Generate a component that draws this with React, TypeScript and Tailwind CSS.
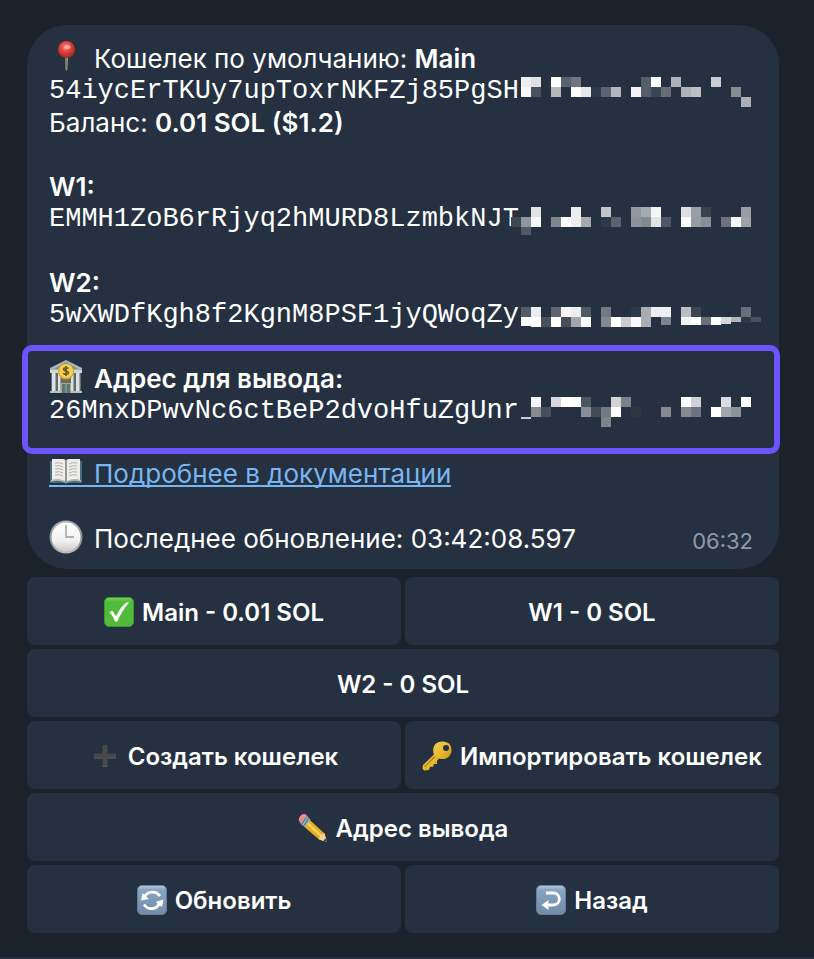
import type { ReactNode } from "react";
import { clsx } from "clsx";

// [column, row, colour, height?] on a 10px grid
type Cell = [number, number, string, number?];

const MAIN_CELLS: Cell[] = [
  [1, 0, "#eeeff1"], [2, 0, "#dfe0e2"], [4, 0, "#ffffff"], [5, 0, "#5a6270"], [6, 0, "#6f767f"],
  [13, 0, "#545e69"], [14, 0, "#ffffff"], [16, 0, "#aeb3b8"], [20, 0, "#c9ccd1"],
  [1, 1, "#f8f8f9"], [2, 1, "#48525d"], [4, 1, "#b4b7bc"], [6, 1, "#ffffff"], [7, 1, "#e6e7e9"],
  [8, 1, "#2d3a47"], [9, 1, "#5c626f"], [10, 1, "#b2b5bb"], [12, 1, "#f3f4f6"], [13, 1, "#545e69"],
  [14, 1, "#3b4653"], [15, 1, "#666c78"], [17, 1, "#aeb1b6"], [18, 1, "#bcbfc3"], [22, 1, "#858c92"],
  [23, 2, "#abaeb5"],
];

const W1_CELLS: Cell[] = [
  [2, 0, "#e0e1e3"], [6, 0, "#ecedef"], [9, 0, "#c2c5ca"], [12, 0, "#91969f"], [13, 0, "#a5a9b1"],
  [14, 0, "#f6f6f7"], [17, 0, "#dddfe1"], [18, 0, "#999ea7"], [19, 0, "#384350"], [23, 0, "#979ca5"],
  [0, 1, "#3b4753"], [1, 1, "#91959c"], [2, 1, "#f6f7f9"], [4, 1, "#80858e"], [5, 1, "#ffffff"],
  [6, 1, "#ecedef"], [7, 1, "#a5aab0"], [9, 1, "#2d3946"], [10, 1, "#59636d"], [12, 1, "#8e939b"],
  [13, 1, "#838990"], [14, 1, "#e1e2e4"], [15, 1, "#4e5763"], [17, 1, "#fafafa"], [18, 1, "#969ba4"],
  [19, 1, "#898f97"], [21, 1, "#6b727c"], [22, 1, "#f5f5f8"], [23, 1, "#9fa2aa"],
  [1, 2, "#4e5965", 8],
];

const W2_CELLS: Cell[] = [
  [1, 0, "#535d68"], [2, 0, "#ecedef"], [4, 0, "#5f6573"], [5, 0, "#f6f6f6"], [6, 0, "#ecedef"],
  [7, 0, "#4f5a65"], [9, 0, "#727980"], [12, 0, "#2d3947"], [13, 0, "#a8abb2"], [14, 0, "#ecedef"],
  [15, 0, "#eff0f2"], [17, 0, "#babdc2"], [18, 0, "#3b4652"], [22, 0, "#28323f"], [23, 0, "#6a707b"],
  [1, 1, "#ffffff", 9], [2, 1, "#ffffff"], [3, 1, "#48525d"], [4, 1, "#ffffff"], [5, 1, "#464f5b"],
  [6, 1, "#a4a6ae"], [7, 1, "#ffffff"], [9, 1, "#838991"], [10, 1, "#ffffff"], [11, 1, "#cccdd2"],
  [12, 1, "#f9f9f9"], [13, 1, "#aaadb3"], [15, 1, "#7d838c", 8], [17, 1, "#f2f3f4", 8],
  [18, 1, "#ffffff", 8], [19, 1, "#68707b", 8], [20, 1, "#ffffff", 8], [21, 1, "#d6d8da", 7],
  [22, 1, "#b2b5ba", 5], [23, 1, "#2e3946", 6], [24, 1, "#464f5b", 5],
];

const WITHDRAW_CELLS: Cell[] = [
  [2, 0, "#f4f5f6"], [4, 0, "#d5d7da"], [5, 0, "#ffffff"], [6, 0, "#fbfbfb"], [7, 0, "#4c5661"],
  [10, 0, "#d1d3d6"], [11, 0, "#7c8289"], [17, 0, "#ffffff"], [18, 0, "#cfd1d4"], [21, 0, "#dbdce0"],
  [23, 0, "#ffffff"],
  [2, 1, "#868b92"], [3, 1, "#444f5a"], [7, 1, "#878d96"], [8, 1, "#424c58"], [9, 1, "#737981"],
  [10, 1, "#fafafa"], [12, 1, "#2c3743"], [15, 1, "#868b92"], [17, 1, "#868b93"], [18, 1, "#6b7280"],
  [20, 1, "#ffffff"], [21, 1, "#a1a4ab"], [22, 1, "#8d9299"],
  [1, 2, "#c8cbd0", 2], [9, 2, "#7e838a"],
];

function Mosaic({ cells, top }: { cells: Cell[]; top: number }) {
  return (
    <svg width="240" height="32" className="shrink-0 overflow-visible" shapeRendering="crispEdges" aria-hidden="true">
      {cells.map(([col, row, fill, height = 10]) => (
        <rect key={`${col}-${row}`} x={col * 10 - 2} y={row * 10 + top} width="10" height={height} fill={fill} />
      ))}
    </svg>
  );
}

function Address({ value, cells, top }: { value: string; cells: Cell[]; top: number }) {
  return (
    <div className="flex h-8">
      <code className="w-[464px] shrink-0 whitespace-nowrap font-['Liberation_Mono',monospace] text-[27px] leading-8">
        {value}
      </code>
      <Mosaic cells={cells} top={top} />
    </div>
  );
}

function PinIcon() {
  return (
    <svg width="34" height="34" viewBox="0 0 34 34" className="mb-1 shrink-0" aria-hidden="true">
      <defs>
        <radialGradient id="pin" cx="0.45" cy="0.35" r="0.65">
          <stop offset="0" stopColor="#ff8d80" />
          <stop offset="0.45" stopColor="#e0453c" />
          <stop offset="1" stopColor="#a82420" />
        </radialGradient>
      </defs>
      <path d="M16 17h3l-.5 12-1 2-1-2z" fill="#a39a92" />
      <path d="M16.5 17h1v12h-.6z" fill="#635751" />
      <circle cx="17.5" cy="9.5" r="8.5" fill="url(#pin)" />
      <ellipse cx="18.5" cy="7" rx="3" ry="2" fill="#ffc6bd" opacity=".65" />
    </svg>
  );
}

function BankIcon() {
  return (
    <svg width="34" height="34" viewBox="0 0 34 34" className="mb-1 shrink-0" aria-hidden="true">
      <path d="M2 12h30v19H2z" fill="#5d6c70" />
      <path d="M17 0 33 8v4H1V8z" fill="#aab7b6" />
      <path d="M17 2 29 9H5z" fill="#7e8e90" />
      <path d="M1 10h32v3H1z" fill="#d0d6d4" />
      <path d="M3 13h4v18H3zm6 0h3v18H9zm13 0h3v18h-3zm5 0h4v18h-4z" fill="#dde1e1" />
      <path d="M6 13h1v18H6zm5 0h1v18h-1zm13 0h1v18h-1zm6 0h1v18h-1z" fill="#9ca7a9" />
      <path d="M1 31h32v2H1z" fill="#b8c0bf" />
      <path d="M12 23h10v10H12z" fill="#c9a545" />
      <path d="M13 24h3.500v9H13zm4.500 0H21v9h-3.500z" fill="#52768a" />
      <circle cx="17" cy="11.5" r="8" fill="#d6a329" />
      <circle cx="17" cy="11" r="7" fill="#f5d14c" />
      <path
        d="M19.500 8.500c-1-1-4.700-1.300-5 .5-.3 2.300 5.300 1.500 5 4-.3 2-4 1.500-5.200.2M17 6v10"
        fill="none"
        stroke="#60521e"
        strokeWidth="1.5"
      />
    </svg>
  );
}

function BookIcon() {
  return (
    <svg width="34" height="34" viewBox="0 3 34 34" className="shrink-0" aria-hidden="true">
      <path d="M1 5h32v22H19l-2 1-2-1H1z" fill="#456f87" />
      <path d="M3 3c5-1 10-1 14 1 4-2 9-2 14-1v21c-5-1-10-1-14 2-4-3-9-3-14-2z" fill="#eeeeeb" />
      <path d="M2 25c6-2 11-1 15 1 4-2 9-3 15-1" fill="none" stroke="#b8bcb9" strokeWidth="1.5" />
      <path d="M17 4v22" stroke="#777" strokeWidth="1.5" />
      <path
        d="M6 7q5-1 8 1M6 10q5-1 8 1M6 13q5-1 8 1M6 16q5-1 8 1M6 19q5-1 8 1M20 8q3-2 8-1M20 11q3-2 8-1M20 14q3-2 8-1M20 17q3-2 8-1M20 20q3-2 8-1"
        fill="none"
        stroke="#b0b1af"
        strokeWidth="1"
      />
    </svg>
  );
}

function ClockIcon() {
  return (
    <svg width="34" height="34" viewBox="0 0 34 34" className="mb-1 shrink-0" aria-hidden="true">
      <defs>
        <linearGradient id="clockRim" x1="0" y1="0" x2="0" y2="1">
          <stop offset="0" stopColor="#a8b5c6" />
          <stop offset="0.5" stopColor="#8b8d90" />
          <stop offset="1" stopColor="#bdbdbd" />
        </linearGradient>
        <linearGradient id="clockFace" x1="0" y1="0" x2="0" y2="1">
          <stop offset="0" stopColor="#ffffff" />
          <stop offset="0.65" stopColor="#f0f0f0" />
          <stop offset="1" stopColor="#c9c9c9" />
        </linearGradient>
      </defs>
      <circle cx="17" cy="17" r="16.5" fill="url(#clockRim)" />
      <circle cx="17" cy="17" r="14.5" fill="url(#clockFace)" />
      <path d="M17 5v12h8" fill="none" stroke="#b0b0b0" strokeWidth="1.8" />
    </svg>
  );
}

function CheckIcon() {
  return (
    <svg width="30" height="30" viewBox="0 0 30 30" className="shrink-0" aria-hidden="true">
      <defs>
        <linearGradient id="check" x1="0" y1="0" x2="0" y2="1">
          <stop offset="0" stopColor="#7ed45e" />
          <stop offset="0.15" stopColor="#4fbd3b" />
          <stop offset="1" stopColor="#53b93c" />
        </linearGradient>
      </defs>
      <rect x=".5" y=".5" width="29" height="29" rx="4.5" fill="url(#check)" stroke="#399a2a" />
      <path d="M5.500 15.500 8 13.500c1.700 1.700 3 3.700 4 5.700C14.700 13.500 18 9 22.300 5.500H25C20 11.500 16.500 17 13.300 24.500H11c-1.200-3.400-2.900-6.300-5.500-9z" fill="#fff" />
    </svg>
  );
}

function PlusIcon() {
  return (
    <svg width="30" height="30" viewBox="0 0 30 30" className="shrink-0" aria-hidden="true">
      <path d="M12.500 4h5v8.500H26v5h-8.500V26h-5v-8.500H4v-5h8.500z" fill="#484848" />
      <path d="M4 17h8.500M17.500 17H26M12.500 25.500h5" stroke="#5b5a59" />
    </svg>
  );
}

function KeyIcon() {
  return (
    <svg width="30" height="30" viewBox="0 0 30 30" className="shrink-0" aria-hidden="true">
      <defs>
        <linearGradient id="key" x1="0" y1="0" x2="1" y2="1">
          <stop offset="0" stopColor="#f7dc67" />
          <stop offset="0.55" stopColor="#e6b62d" />
          <stop offset="1" stopColor="#a87712" />
        </linearGradient>
      </defs>
      <path
        fillRule="evenodd"
        d="M13 3.500c3-4 11-4 14.500-.5 3 4 2.500 10-1 13-3 2.500-7 2.500-9.500 1.500L15 20v3h-3l-1 3-3-.3L7 29l-5 .5-1.500-2L1 24l11-10.500c-1.500-3-1-7 1-10zM24 4a3 3 0 1 0 .1 6 3 3 0 0 0-.1-6z"
        fill="url(#key)"
      />
      <path d="M2.500 26 13 15.500" stroke="#a97f20" strokeWidth="1.2" />
    </svg>
  );
}

function PencilIcon() {
  return (
    <svg width="30" height="30" viewBox="0 0 30 30" className="shrink-0" aria-hidden="true">
      <path d="m8.500 4 18 16.500L29 29l-8-2.500L3 11z" fill="#e7ad24" />
      <path d="m7 6.500 17.500 16-1.500 1.700-17.500-16z" fill="#f9d75b" />
      <path d="M3 11 1 8C-.3 5.500 3.500.2 7 1l3.500 3-6 8.500z" fill="#e5797d" />
      <path d="m7.500 2 5 4.200-5.500 8L2.500 10z" fill="#8eabc0" />
      <path d="m9 3.500-5.500 8M11 5l-5.500 8" stroke="#526e83" />
      <path d="M.8 7C.8 4 4 .5 7 1l1.500 1.300-5 7z" fill="#ee8a8d" />
      <path d="m26.500 20.500 2.500 8.500-8-2.500c.5-2.800 3-5.500 5.500-6z" fill="#efd3a4" />
      <path d="m28 25.500 1 3.500-3.500-1c.5-1.200 1.400-2.100 2.500-2.500z" fill="#39383a" />
    </svg>
  );
}

function BlueKey({ id, children }: { id: string; children: ReactNode }) {
  return (
    <svg width="30" height="30" viewBox="0 0 30 30" className="shrink-0" aria-hidden="true">
      <defs>
        <linearGradient id={id} x1="0" y1="0" x2="0" y2="1">
          <stop offset="0" stopColor="#b4cce0" />
          <stop offset="0.15" stopColor="#87a5c2" />
          <stop offset="1" stopColor="#718ba6" />
        </linearGradient>
      </defs>
      <rect x=".5" y=".5" width="29" height="29" rx="4.5" fill={`url(#${id})`} stroke="#668099" />
      {children}
    </svg>
  );
}

function RefreshIcon() {
  return (
    <BlueKey id="refresh">
      <path d="M7.500 11.500C11 6 18.500 5.500 23 11M22.500 18.500C19 25 11 25.500 7 19.500" fill="none" stroke="#fff" strokeWidth="2.8" />
      <path d="m5.500 8-1.500 7.500 8-1.500zM26.500 14.500 18.500 17l6.500 5z" fill="#fff" />
    </BlueKey>
  );
}

function BackIcon() {
  return (
    <BlueKey id="back">
      <path d="M10 8h7c8.500 0 8.500 12 0 12h-5" fill="none" stroke="#fff" strokeWidth="2.8" />
      <path d="m5.500 20 7-5v10z" fill="#fff" />
    </BlueKey>
  );
}

function KeyboardButton({ icon, wide, children }: { icon?: ReactNode; wide?: boolean; children: ReactNode }) {
  return (
    <button
      type="button"
      className={clsx(
        "flex h-[68px] items-center justify-center gap-2 whitespace-nowrap rounded-lg bg-[#253040] pt-0.5 text-2xl font-semibold",
        wide && "col-span-2"
      )}
    >
      {icon}
      <span className="pt-0.5">{children}</span>
    </button>
  );
}

export default function App() {
  return (
    <main className="min-h-screen border-b-2 border-[#242f40] bg-[#1b222a] pt-[25px] pr-[35px] pb-6 pl-[27px] font-['Inter','Liberation_Sans',sans-serif] text-white">
      <article className="rounded-[40px] bg-[#253040] px-[22px] pt-[18px] pb-[14px] text-[26px] leading-8">
        <section>
          <div className="flex h-8 items-center gap-[11px]">
            <PinIcon />
            <p>
              Кошелек по умолчанию: <strong className="font-semibold">Main</strong>
            </p>
          </div>
          <Address value="54iycErTKUy7upToxrNKFZj85PgSH" cells={MAIN_CELLS} top={2} />
          <p>
            Баланс: <strong className="font-semibold">0.01 SOL ($1.2)</strong>
          </p>
        </section>

        <section className="mt-8">
          <h2 className="font-semibold">W1:</h2>
          <Address value="EMMH1ZoB6rRjyq2hMURD8LzmbkNJT" cells={W1_CELLS} top={4} />
        </section>

        <section className="mt-8">
          <h2 className="font-semibold">W2:</h2>
          <Address value="5wXWDfKgh8f2KgnM8PSF1jyQWoqZy" cells={W2_CELLS} top={8} />
        </section>

        <section className="relative mt-8">
          <div className="pointer-events-none absolute -top-[18px] -right-[23px] -bottom-[27px] -left-[27px] rounded-[10px] border-[6px] border-[#6a54fa]" />
          <h2 className="flex h-8 items-center gap-[11px] font-semibold">
            <BankIcon />
            Адрес для вывода:
          </h2>
          <Address value="26MnxDPwvNc6ctBeP2dvoHfuZgUnr" cells={WITHDRAW_CELLS} top={2} />
        </section>

        <div className="mt-8 flex h-8 items-start">
          <a
            href="#docs"
            className="flex h-7 items-start gap-[11px] border-b-2 border-[#78b6f3] leading-[30px] text-[#78b6f3]"
          >
            <BookIcon />
            Подробнее в документации
          </a>
        </div>

        <footer className="mt-8 flex h-8 items-center justify-between pr-1">
          <div className="flex items-center gap-[11px]">
            <ClockIcon />
            <p>Последнее обновление: 03:42:08.597</p>
          </div>
          <time className="pt-1 text-[22px] text-[#8d9aaa]">06:32</time>
        </footer>
      </article>

      <div className="mt-2 grid grid-cols-2 gap-1">
        <KeyboardButton icon={<CheckIcon />}>Main - 0.01 SOL</KeyboardButton>
        <KeyboardButton>W1 - 0 SOL</KeyboardButton>
        <KeyboardButton wide>W2 - 0 SOL</KeyboardButton>
        <KeyboardButton icon={<PlusIcon />}>Создать кошелек</KeyboardButton>
        <KeyboardButton icon={<KeyIcon />}>Импортировать кошелек</KeyboardButton>
        <KeyboardButton icon={<PencilIcon />} wide>
          Адрес вывода
        </KeyboardButton>
        <KeyboardButton icon={<RefreshIcon />}>Обновить</KeyboardButton>
        <KeyboardButton icon={<BackIcon />}>Назад</KeyboardButton>
      </div>
    </main>
  );
}
